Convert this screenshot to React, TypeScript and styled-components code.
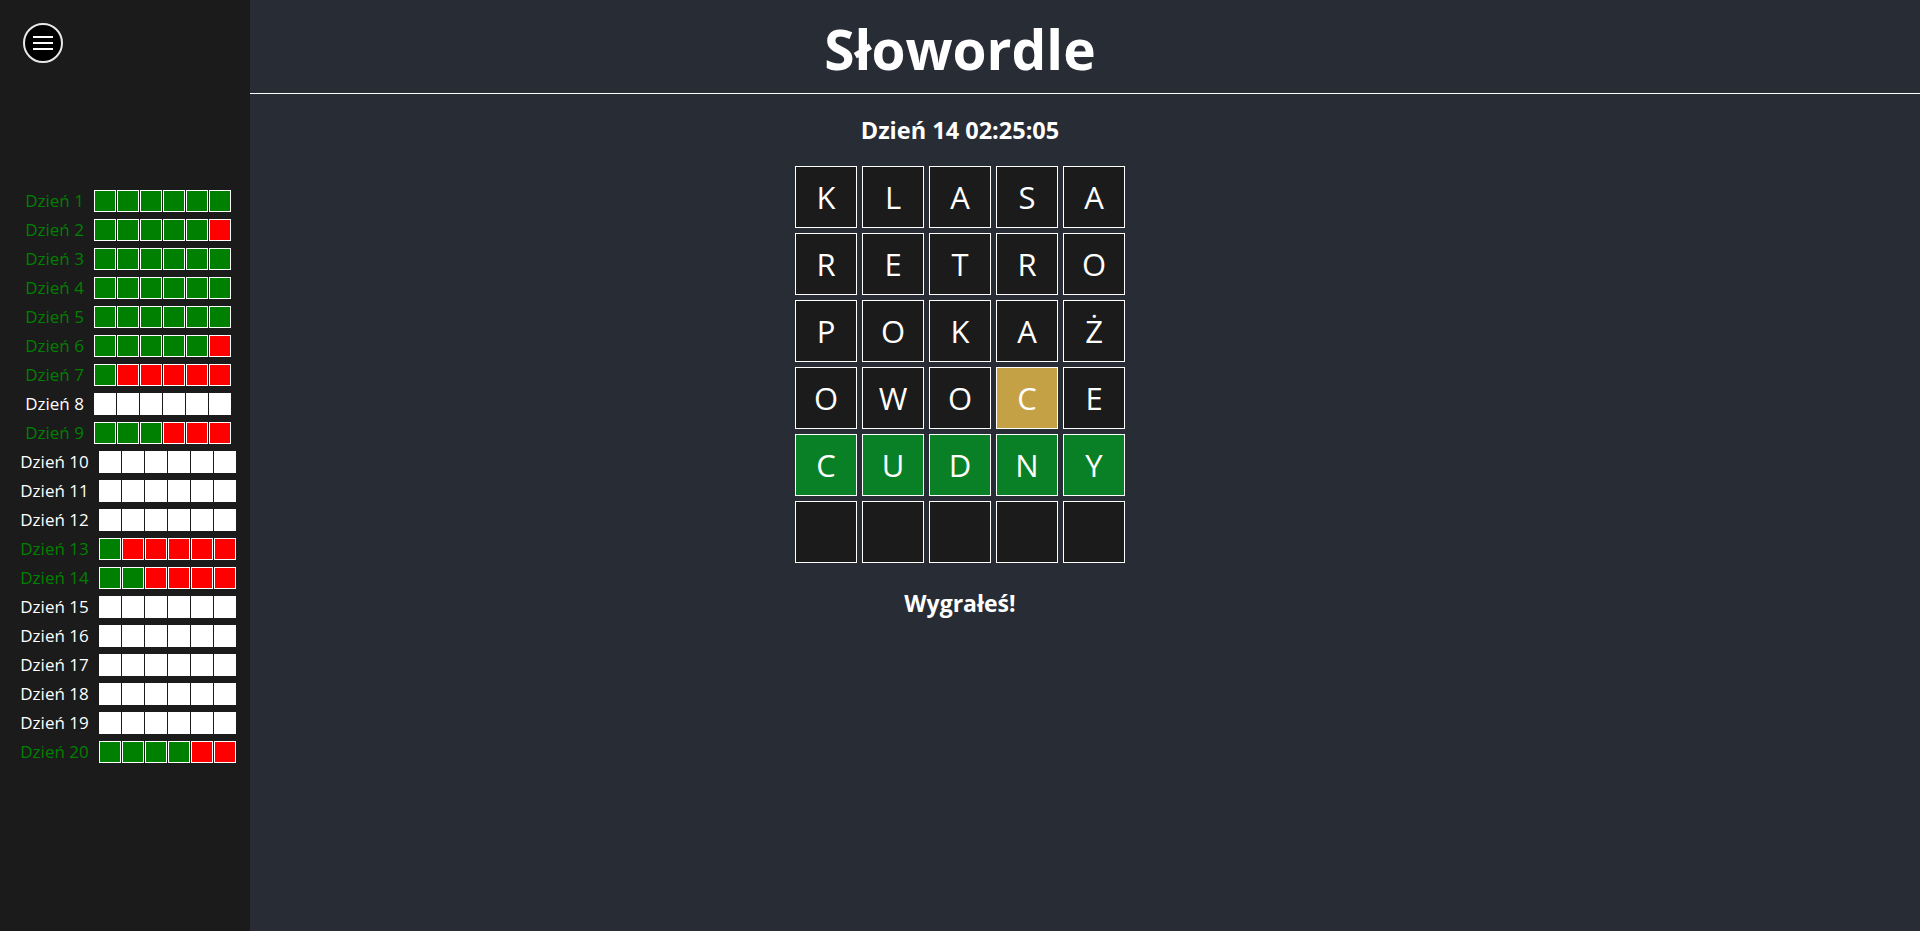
import styled, { createGlobalStyle } from "styled-components";

type Mark = "g" | "r" | "w";

const GlobalStyle = createGlobalStyle`
  html, body {
    margin: 0;
    padding: 0;
    background-color: #282c34;
    color: white;
    font-family: "Open Sans", "Noto Sans", "DejaVu Sans", sans-serif;
  }
  * {
    box-sizing: border-box;
  }
`;

const Page = styled.div`
  min-height: 100vh;
  background-color: #282c34;
`;

const Drawer = styled.aside`
  position: fixed;
  left: 0;
  top: 0;
  width: 250px;
  height: 100vh;
  background-color: #1b1b1b;
  padding: 23px 0 0 6px;
  z-index: 10;
`;

const MenuButton = styled.button`
  display: block;
  width: 40px;
  height: 40px;
  margin-left: 17px;
  padding: 0;
  border: none;
  background: none;
  cursor: pointer;
  svg {
    display: block;
  }
`;

const DayList = styled.div`
  margin-top: 127px;
  display: flex;
  flex-direction: column;
  gap: 7px;
`;

const DayRow = styled.div`
  display: flex;
  align-items: center;
  justify-content: center;
  gap: 10px;
  height: 22px;
`;

const DayLabel = styled.span<{ done: boolean }>`
  font-size: 17px;
  line-height: 22px;
  color: ${(props) => (props.done ? "green" : "white")};
`;

const Boxes = styled.div`
  display: flex;
  gap: 1px;
`;

const Box = styled.div<{ mark: Mark }>`
  width: 22px;
  height: 22px;
  border: 1px solid white;
  background-color: ${(props) =>
    props.mark === "g" ? "#008000" : props.mark === "r" ? "#ff0000" : "#ffffff"};
`;

const Header = styled.header`
  padding: 11px 0 6px;
  border-bottom: 1px solid white;
  h1 {
    margin: 0;
    font-size: 55px;
    line-height: 76px;
    font-weight: 700;
    text-align: center;
  }
`;

const Board = styled.main`
  display: flex;
  flex-direction: column;
  align-items: center;
`;

const DayTitle = styled.h2`
  margin: 20px 0 19px;
  font-size: 23.5px;
  line-height: 33px;
  font-weight: 700;
`;

const Grid = styled.div`
  display: grid;
  grid-template-columns: repeat(5, 62px);
  grid-auto-rows: 62px;
  gap: 5px;
`;

const Cell = styled.div<{ state: string }>`
  display: flex;
  align-items: center;
  justify-content: center;
  border: 1px solid white;
  font-size: 31px;
  color: white;
  background-color: ${(props) =>
    props.state === "c" ? "#0a8026" : props.state === "p" ? "#c5a145" : "#1b1b1b"};
`;

const Result = styled.h2`
  margin: 24px 0 0;
  font-size: 23px;
  line-height: 33px;
  font-weight: 700;
`;

const days: { n: number; marks: string }[] = [
  { n: 1, marks: "gggggg" },
  { n: 2, marks: "gggggr" },
  { n: 3, marks: "gggggg" },
  { n: 4, marks: "gggggg" },
  { n: 5, marks: "gggggg" },
  { n: 6, marks: "gggggr" },
  { n: 7, marks: "grrrrr" },
  { n: 8, marks: "wwwwww" },
  { n: 9, marks: "gggrrr" },
  { n: 10, marks: "wwwwww" },
  { n: 11, marks: "wwwwww" },
  { n: 12, marks: "wwwwww" },
  { n: 13, marks: "grrrrr" },
  { n: 14, marks: "ggrrrr" },
  { n: 15, marks: "wwwwww" },
  { n: 16, marks: "wwwwww" },
  { n: 17, marks: "wwwwww" },
  { n: 18, marks: "wwwwww" },
  { n: 19, marks: "wwwwww" },
  { n: 20, marks: "ggggrr" },
];

// x = absent, p = present, c = correct
const guesses: { word: string; states: string }[] = [
  { word: "KLASA", states: "xxxxx" },
  { word: "RETRO", states: "xxxxx" },
  { word: "POKAŻ", states: "xxxxx" },
  { word: "OWOCE", states: "xxxpx" },
  { word: "CUDNY", states: "ccccc" },
  { word: "     ", states: "xxxxx" },
];

function MenuIcon() {
  return (
    <svg width="40" height="40" viewBox="0 0 40 40">
      <circle cx="20" cy="20" r="19" fill="#000" stroke="#e8e8e8" strokeWidth="2" />
      <g stroke="#fff" strokeWidth="2" strokeLinecap="butt">
        <line x1="10" y1="14" x2="30" y2="14" />
        <line x1="10" y1="20" x2="30" y2="20" />
        <line x1="10" y1="26" x2="30" y2="26" />
      </g>
    </svg>
  );
}

function App() {
  return (
    <Page>
      <GlobalStyle />
      <Drawer>
        <MenuButton aria-label="menu">
          <MenuIcon />
        </MenuButton>
        <DayList>
          {days.map((d) => (
            <DayRow key={d.n}>
              <DayLabel done={!d.marks.startsWith("w")}>Dzień {d.n}</DayLabel>
              <Boxes>
                {d.marks.split("").map((m, i) => (
                  <Box key={i} mark={m as Mark} />
                ))}
              </Boxes>
            </DayRow>
          ))}
        </DayList>
      </Drawer>
      <Header>
        <h1>Słowordle</h1>
      </Header>
      <Board>
        <DayTitle>Dzień 14 02:25:05</DayTitle>
        <Grid>
          {guesses.map((g, r) =>
            g.word.split("").map((ch, i) => (
              <Cell key={r + "-" + i} state={g.states[i]}>
                {ch.trim()}
              </Cell>
            ))
          )}
        </Grid>
        <Result>Wygrałeś!</Result>
      </Board>
    </Page>
  );
}

export default App;
